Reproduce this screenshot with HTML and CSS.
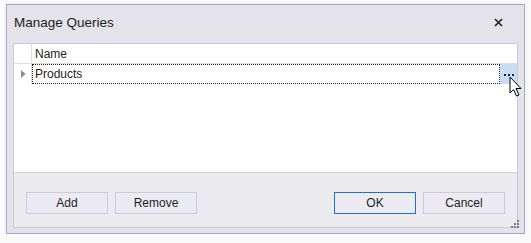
FILE: index.html
```html
<!DOCTYPE html>
<html>
<head>
<meta charset="utf-8">
<link rel="stylesheet" href="styles.css">
</head>
<body>
<div class="window">
  <div class="titlebar">
    <span class="title">Manage Queries</span>
    <svg class="close" width="9" height="9" viewBox="0 0 9 9"><path d="M1 1 L8 8 M8 1 L1 8" stroke="#222" stroke-width="1.6"/></svg>
  </div>
  <div class="panel">
    <div class="grid">
      <div class="row header">
        <div class="ind"></div>
        <div class="cell">Name</div>
      </div>
      <div class="row data">
        <div class="ind"><svg width="5" height="8" viewBox="0 0 5 8"><path d="M0 0 L4.5 4 L0 8 Z" fill="#8a8a8a"/></svg></div>
        <div class="cell focus">Products</div>
        <div class="ellipsis"><span></span><span></span><span></span></div>
      </div>
      <svg class="cursor" width="14" height="22" viewBox="0 0 14 22"><path d="M1 1 L1 17 L4.5 13.5 L7.5 20 L10 19 L7 12.5 L12 12.5 Z" fill="#fff" stroke="#000" stroke-width="1" stroke-linejoin="round"/></svg>
    </div>
    <div class="buttons">
      <div class="btn">Add</div>
      <div class="btn">Remove</div>
      <div class="spacer"></div>
      <div class="btn primary">OK</div>
      <div class="btn">Cancel</div>
    </div>
  </div>
  <svg class="grip" width="8" height="8" viewBox="0 0 8 8" fill="#77778a"><rect x="6" y="0" width="2" height="2"/><rect x="3" y="3" width="2" height="2"/><rect x="6" y="3" width="2" height="2"/><rect x="0" y="6" width="2" height="2"/><rect x="3" y="6" width="2" height="2"/><rect x="6" y="6" width="2" height="2"/></svg>
</div>
</body>
</html>
```
FILE: styles.css
```css
html, body { margin: 0; padding: 0; background: #fafafa; }
body { font-family: "Liberation Sans", Arial, sans-serif; font-size: 12px; color: #1e1e1e; }
.window {
  position: relative;
  margin: 4px 0 0 6px;
  width: 517px;
  height: 228px;
  border: 1px solid #a7a7c6;
  background: #e4e3ea;
  box-shadow: 0 0 4px rgba(0,0,0,0.08);
  display: flex;
  flex-direction: column;
}
.titlebar {
  height: 38px;
  display: flex;
  align-items: center;
  padding-left: 7px;
  padding-right: 21px;
  box-sizing: border-box;
}
.title { font-family: "Liberation Sans", Arial, sans-serif; font-size: 13.5px; color: #222; flex: 1; margin-top: -3px; }
.close { margin-top: -3px; }
.panel {
  margin: 0 6px;
  height: 183px;
  border: 1px solid #c9c8d6;
  background: #ecebf0;
  display: flex;
  flex-direction: column;
}
.grid {
  position: relative;
  height: 128px;
  background: #fff;
  border-bottom: 1px solid #cfcedb;
}
.row { display: flex; }
.header { height: 19px; border-bottom: 1px solid #dedede; }
.ind { width: 18px; flex-shrink: 0; border-right: 1px solid #dedede; display: flex; align-items: center; justify-content: center; padding-left: 1px; box-sizing: border-box;}
.cell { padding-left: 3px; display: flex; align-items: center; }
.header .cell { flex: 1; }
.data { height: 20px; }
.focus { flex: 1; border: 1px dotted #222; box-sizing: border-box; padding-left: 2px; }
.ellipsis {
  width: 17px;
  flex-shrink: 0;
  background: #c9def4;
  display: flex;
  align-items: center;
  justify-content: center;
  gap: 2px;
  padding-top: 1px;
}
.ellipsis span { width: 2px; height: 2px; background: #222; }
.cursor { position: absolute; left: 495px; top: 32px; }
.buttons {
  flex: 1;
  display: flex;
  align-items: flex-start;
  padding: 19px 12px 0 12px;
  gap: 7px;
}
.spacer { flex: 1; }
.btn {
  width: 80px;
  height: 20px;
  border: 1px solid #cbcad8;
  background: #ecebf1;
  display: flex;
  align-items: center;
  justify-content: center;
}
.btn.primary { border-color: #1f72c4; }
.grip { position: absolute; right: 5px; bottom: 5px; }
```
